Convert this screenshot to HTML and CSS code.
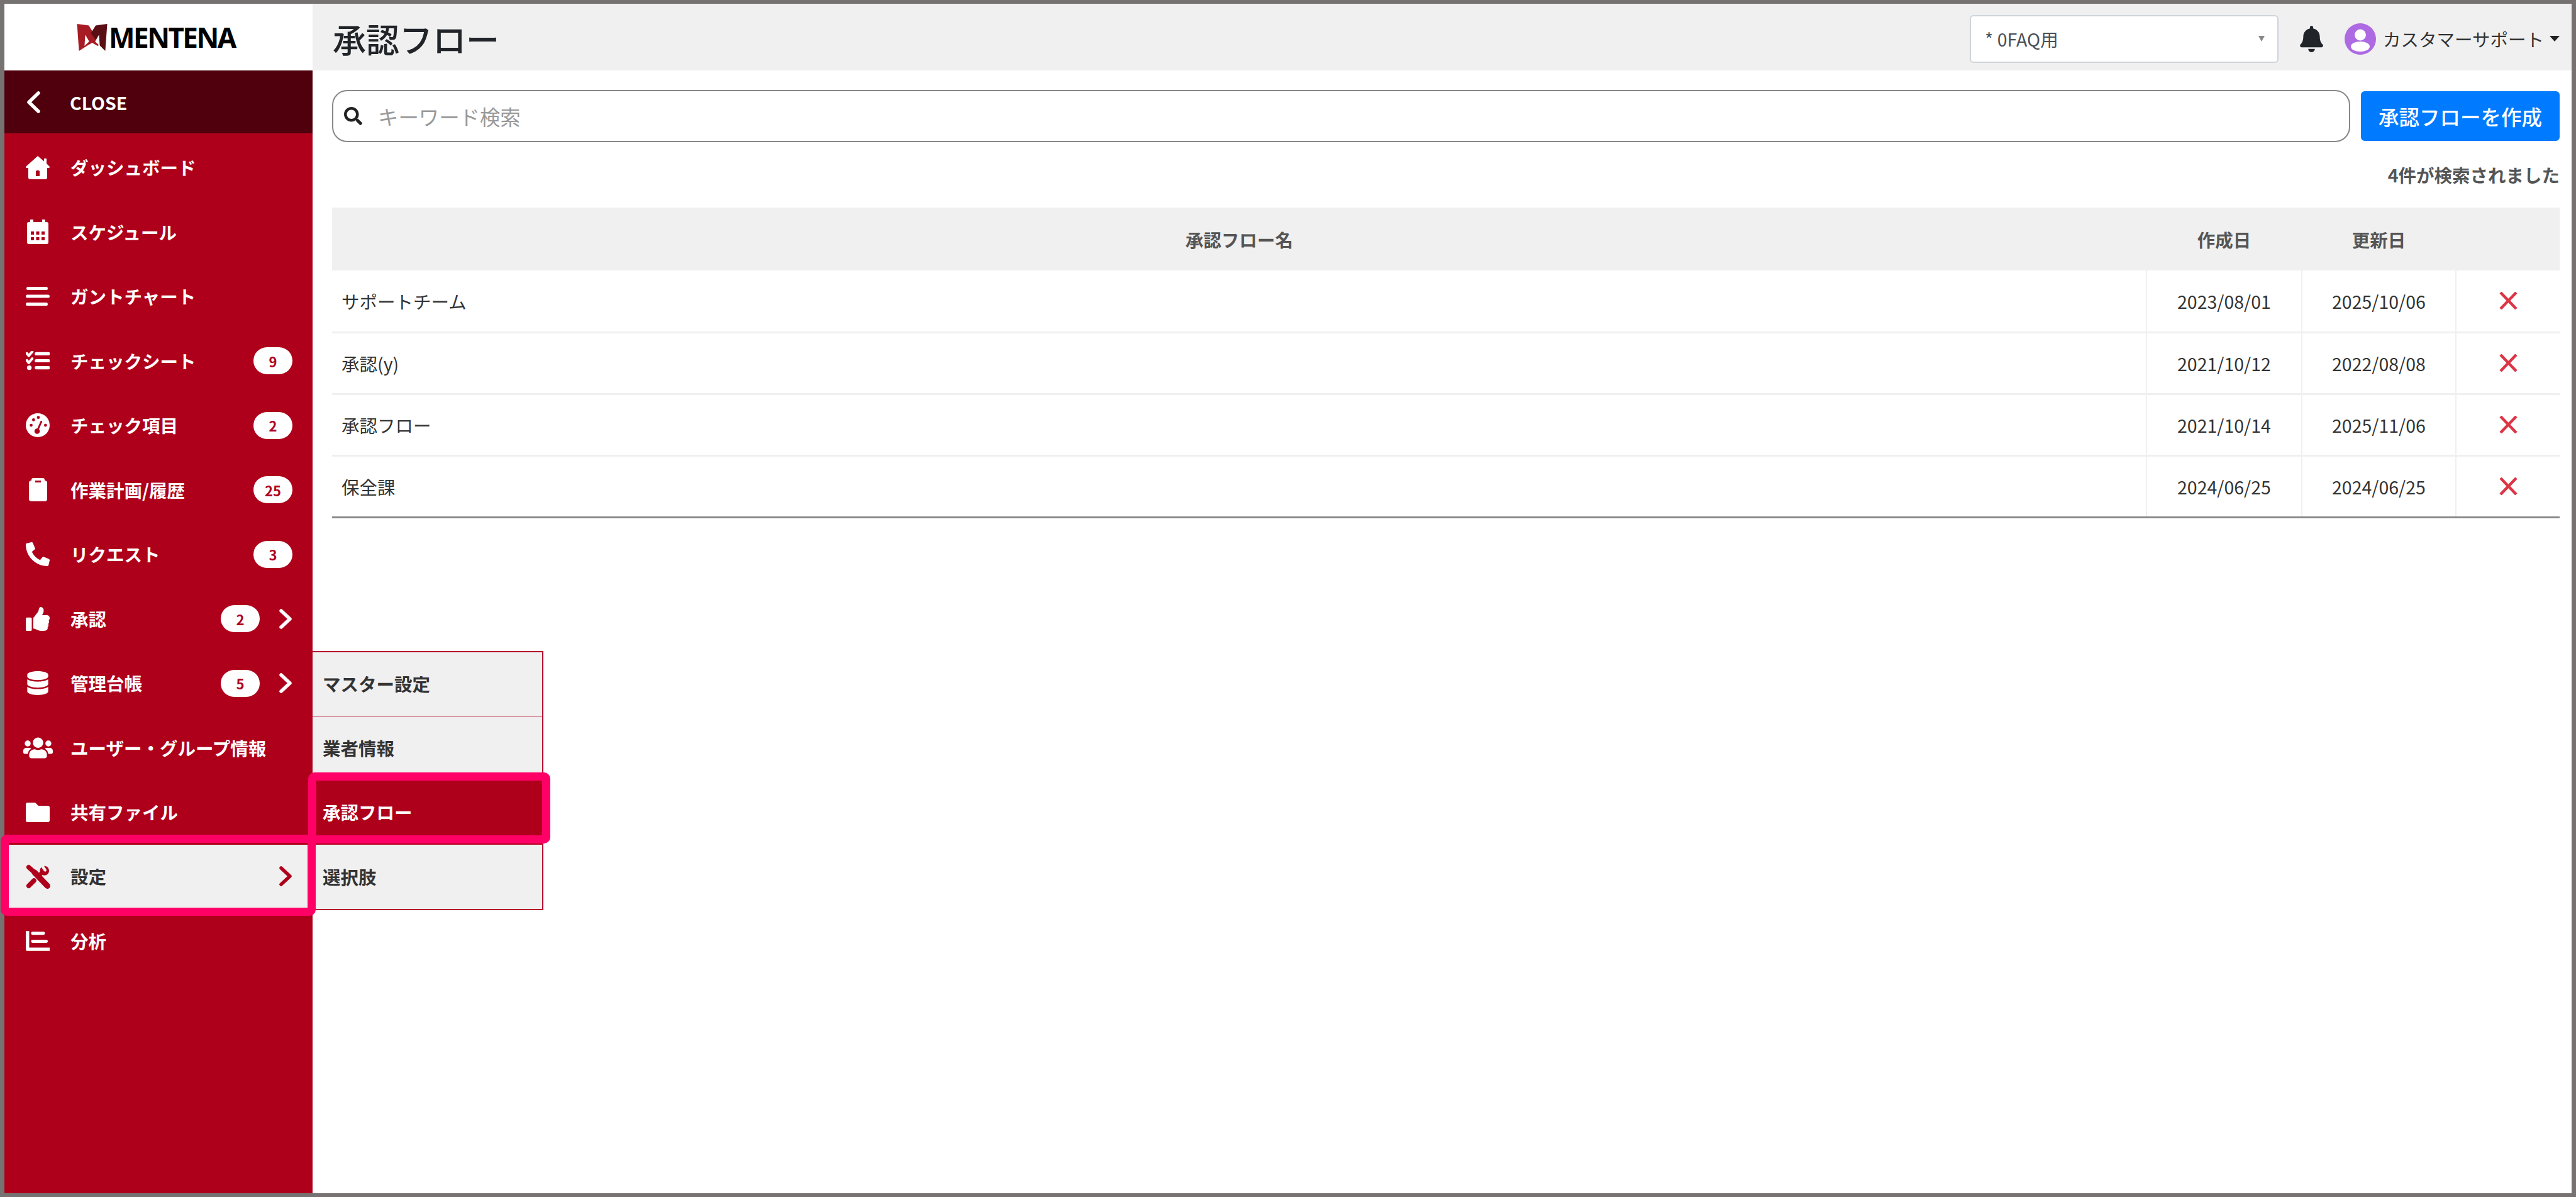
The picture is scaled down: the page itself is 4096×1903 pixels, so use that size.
FILE: index.html
```html
<!DOCTYPE html>
<html lang="ja">
<head>
<meta charset="utf-8">
<title>承認フロー</title>
<link rel="stylesheet" href="styles.css">
</head>
<body>
<div class="frame">
  <aside class="sidebar">
    <div class="logo">
      <svg class="logo-mark" viewBox="0 0 154 138">
        <polygon class="lg-red" points="0,0 60,8 118,104 105,112 77,96 50,112 10,138"/>
        <polygon class="lg-dark" points="154,0 95,8 70,48 118,112 144,138"/>
        <polygon class="lg-white" points="42,55 62,90 38,112"/>
        <polygon class="lg-white" points="112,55 92,90 116,112"/>
      </svg>
      <span class="logo-text">MENTENA</span>
    </div>
    <div class="close-row">
      <svg class="close-chevron" viewBox="0 0 23 35"><polyline class="st-white" points="19,3 4,17.500 19,32"/></svg>
      <span>CLOSE</span>
    </div>
    <nav class="nav">
      <a class="row">
        <span class="ic"><svg class="i-home" viewBox="0 0 38 37"><path class="f-white" fill-rule="evenodd" d="M19 0 L29 8.500 V4 H33 V12 L38 17 Q38.500 19 36 19 H34 V34 Q34 37 31 37 H7 Q4 37 4 34 V19 H2 Q-0.500 19 0 17 Z M16 24 V32 H22 V24 Q19 21.500 16 24 Z"/></svg></span>
        <span class="lb">ダッシュボード</span>
      </a>
      <a class="row">
        <span class="ic"><svg class="i-cal" viewBox="0 0 34 39"><path class="f-white" fill-rule="evenodd" d="M5 0 H10 V4 H24 V0 H29 V4 H31 Q34 4 34 7 V36 Q34 39 31 39 H3 Q0 39 0 36 V7 Q0 4 3 4 H5 Z M6 19 V24 H11 V19 Z M14.500 19 V24 H19.500 V19 Z M23 19 V24 H28 V19 Z M6 28 V33 H11 V28 Z M14.500 28 V33 H19.500 V28 Z M23 28 V33 H28 V28 Z"/></svg></span>
        <span class="lb">スケジュール</span>
      </a>
      <a class="row">
        <span class="ic"><svg class="i-bars" viewBox="0 0 38 30"><path class="f-white" d="M3 0 H33 Q35 0 35 2.500 Q35 5 33 5 H3 Q1 5 1 2.500 Q1 0 3 0 Z M2 12.500 H36 Q38 12.500 38 15 Q38 17.500 36 17.500 H2 Q0 17.500 0 15 Q0 12.500 2 12.500 Z M2 25 H33 Q35 25 35 27.500 Q35 30 33 30 H2 Q0 30 0 27.500 Q0 25 2 25 Z"/></svg></span>
        <span class="lb">ガントチャート</span>
      </a>
      <a class="row">
        <span class="ic"><svg class="i-tasks" viewBox="0 0 41 33"><polyline class="st-check" points="2,4 5,8 11,1"/><polyline class="st-check" points="2,16 5,20 11,13"/><circle class="f-white" cx="6" cy="28.500" r="4"/><path class="st-line" d="M18 4.500 H39 M18 16.500 H39 M18 28.500 H39"/></svg></span>
        <span class="lb">チェックシート</span>
        <span class="badge">9</span>
      </a>
      <a class="row">
        <span class="ic"><svg class="i-gauge" viewBox="0 0 40 40"><circle class="f-white" cx="20" cy="20" r="20"/><circle class="f-red" cx="13" cy="11" r="2.500"/><circle class="f-red" cx="21" cy="7" r="2.500"/><circle class="f-red" cx="9" cy="20" r="2.500"/><circle class="f-red" cx="33" cy="20" r="2.500"/><path class="st-needle" d="M19 30 L26 14"/><circle class="f-red" cx="19" cy="30" r="4.500"/></svg></span>
        <span class="lb">チェック項目</span>
        <span class="badge">2</span>
      </a>
      <a class="row">
        <span class="ic"><svg class="i-clip" viewBox="0 0 29 37"><path class="f-white" fill-rule="evenodd" d="M7 0 H22 Q25 0 25 3 V4 Q29 4 29 8 V33 Q29 37 25 37 H4 Q0 37 0 33 V8 Q0 4 4 4 V3 Q4 0 7 0 Z M10 4 V7 H19 V4 Z"/></svg></span>
        <span class="lb">作業計画/履歴</span>
        <span class="badge">25</span>
      </a>
      <a class="row">
        <span class="ic"><svg class="i-phone" viewBox="0 0 512 512"><path class="f-white" transform="translate(512 0) scale(-1 1)" d="M493.4 24.6l-104-24c-11.3-2.6-22.9 3.300-27.5 13.900l-48 112c-4.200 9.800-1.400 21.300 6.900 28l60.600 49.600c-36 76.700-98.900 140.500-177.200 177.200l-49.600-60.600c-6.800-8.300-18.200-11.100-28-6.900l-112 48C3.900 366.500-2 378.100.6 389.400l24 104C27.100 504.200 36.700 512 48 512c256.100 0 464-207.500 464-464 0-11.200-7.700-20.900-18.600-23.400z"/></svg></span>
        <span class="lb">リクエスト</span>
        <span class="badge">3</span>
      </a>
      <a class="row has-sub">
        <span class="ic"><svg class="i-thumb" viewBox="0 0 512 512"><path class="f-white" d="M104 224H24c-13.255 0-24 10.745-24 24v240c0 13.255 10.745 24 24 24h80c13.255 0 24-10.745 24-24V248c0-13.255-10.745-24-24-24zM384 81.452c0 42.416-25.97 66.208-33.277 94.548h101.723c33.397 0 59.397 27.746 59.553 58.098.084 17.938-7.546 37.249-19.439 49.197l-.11.11c9.836 23.337 8.237 56.037-9.308 79.469 8.681 25.895-.069 57.704-16.382 74.757 4.298 17.598 2.244 32.575-6.148 44.632C440.202 511.587 389.616 512 346.839 512l-2.845-.001c-48.287-.017-87.806-17.598-119.56-31.725-15.957-7.099-36.821-15.887-52.651-16.178-6.54-.12-11.783-5.457-11.783-11.998v-213.77c0-3.2 1.282-6.271 3.558-8.521 39.614-39.144 56.648-80.587 89.117-113.111 14.804-14.832 20.188-37.236 25.393-58.902C282.515 39.293 291.817 0 312 0c24 0 72 8 72 81.452z"/></svg></span>
        <span class="lb">承認</span>
        <span class="badge">2</span>
        <svg class="chev" viewBox="0 0 20 32"><polyline class="st-white" points="3,3 17,16 3,29"/></svg>
      </a>
      <a class="row has-sub">
        <span class="ic"><svg class="i-db" viewBox="0 0 448 512"><path class="f-white" d="M448 73.143v45.714C448 159.143 347.667 192 224 192S0 159.143 0 118.857V73.143C0 32.857 100.333 0 224 0s224 32.857 224 73.143zM448 176v102.857C448 319.143 347.667 352 224 352S0 319.143 0 278.857V176c48.125 33.143 136.208 48.572 224 48.572S399.874 209.143 448 176zm0 160v102.857C448 479.143 347.667 512 224 512S0 479.143 0 438.857V336c48.125 33.143 136.208 48.572 224 48.572S399.874 369.143 448 336z"/></svg></span>
        <span class="lb">管理台帳</span>
        <span class="badge">5</span>
        <svg class="chev" viewBox="0 0 20 32"><polyline class="st-white" points="3,3 17,16 3,29"/></svg>
      </a>
      <a class="row">
        <span class="ic"><svg class="i-users" viewBox="0 0 640 512"><path class="f-white" d="M96 224c35.3 0 64-28.7 64-64s-28.7-64-64-64-64 28.7-64 64 28.7 64 64 64zm448 0c35.3 0 64-28.7 64-64s-28.7-64-64-64-64 28.7-64 64 28.7 64 64 64zm32 32h-64c-17.6 0-33.500 7.100-45.100 18.600 40.300 22.100 68.900 62 75.100 109.400h66c17.700 0 32-14.300 32-32v-32c0-35.300-28.700-64-64-64zm-256 0c61.900 0 112-50.100 112-112S381.900 32 320 32 208 82.100 208 144s50.100 112 112 112zm76.800 32h-8.300c-20.800 10-43.900 16-68.500 16s-47.600-6-68.500-16h-8.300C179.600 288 128 339.600 128 403.200V432c0 26.500 21.500 48 48 48h288c26.500 0 48-21.500 48-48v-28.800c0-63.600-51.600-115.200-115.200-115.200zm-223.700-13.400C161.500 263.100 145.600 256 128 256H64c-35.300 0-64 28.700-64 64v32c0 17.700 14.300 32 32 32h65.900c6.300-47.400 34.900-87.300 75.200-109.400z"/></svg></span>
        <span class="lb">ユーザー・グループ情報</span>
      </a>
      <a class="row">
        <span class="ic"><svg class="i-folder" viewBox="0 0 38 31"><path class="f-white" d="M3 0 H15 L20 5 H35 Q38 5 38 8 V28 Q38 31 35 31 H3 Q0 31 0 28 V3 Q0 0 3 0 Z"/></svg></span>
        <span class="lb">共有ファイル</span>
      </a>
      <a class="row row-active has-sub">
        <span class="ic"><svg class="i-tools" viewBox="0 0 42 42"><path class="st-tool-a" d="M5 5 L15 14"/><path class="st-tool-b" d="M15 14 L37 37"/><path class="st-tool-a" d="M5 37 L14 28"/><path class="st-tool-c" d="M21 21 L30 12"/><circle class="f-red" cx="32" cy="11" r="8"/><path class="st-tool-n" d="M29 4 L33 10"/></svg></span>
        <span class="lb">設定</span>
        <svg class="chev chev-spaced" viewBox="0 0 20 32"><polyline class="st-red" points="3,3 17,16 3,29"/></svg>
      </a>
      <a class="row">
        <span class="ic"><svg class="i-chart" viewBox="0 0 42 35"><path class="f-white" d="M0 0 H6 V29 H42 V35 H2 Q0 35 0 33 Z"/><path class="st-line-th" d="M12 4 H31 M12 18 H36"/></svg></span>
        <span class="lb">分析</span>
      </a>
    </nav>
    <div class="flyout">
      <a class="fly-item">マスター設定</a>
      <a class="fly-item">業者情報</a>
      <a class="fly-item fly-active">承認フロー</a>
      <a class="fly-item">選択肢</a>
    </div>
  </aside>
  <main class="main">
    <header class="topbar">
      <h1 class="title">承認フロー</h1>
      <div class="select">
        <span>* 0FAQ用</span>
        <i class="select-arrow"></i>
      </div>
      <svg class="bell" viewBox="0 0 448 512"><path class="f-bell" d="M224 512c35.320 0 63.970-28.650 63.970-64H160.030c0 35.350 28.650 64 63.970 64zm215.390-149.710c-19.320-20.760-55.470-51.990-55.470-154.290 0-77.700-54.480-139.900-127.940-155.160V32c0-17.670-14.320-32-31.980-32s-31.980 14.330-31.980 32v20.840C118.560 68.100 64.080 130.300 64.080 208c0 102.300-36.150 133.530-55.470 154.290-6 6.450-8.660 14.160-8.610 21.710.11 16.400 12.980 32 32.100 32h383.800c19.120 0 32-15.600 32.100-32 .05-7.550-2.610-15.270-8.610-21.710z"/></svg>
      <svg class="avatar" viewBox="0 0 50 50"><circle class="f-purple" cx="25" cy="25" r="25"/><circle class="f-plain" cx="25" cy="18.500" r="9"/><ellipse class="f-plain" cx="25" cy="37" rx="15" ry="8"/></svg>
      <span class="user">カスタマーサポート</span>
      <i class="user-caret"></i>
    </header>
    <div class="content">
      <div class="tools">
        <div class="search">
          <svg class="search-ic" viewBox="0 0 512 512"><path class="f-dark" d="M505 442.700L405.300 343c-4.500-4.500-10.600-7-17-7H372c27.600-35.300 44-79.700 44-128C416 93.100 322.900 0 208 0S0 93.100 0 208s93.100 208 208 208c48.300 0 92.700-16.400 128-44v16.300c0 6.400 2.500 12.500 7 17l99.700 99.700c9.400 9.400 24.600 9.400 33.900 0l28.300-28.300c9.400-9.400 9.400-24.600.1-34zM208 336c-70.700 0-128-57.200-128-128 0-70.700 57.200-128 128-128 70.700 0 128 57.200 128 128 0 70.700-57.200 128-128 128z"/></svg>
          <span class="placeholder">キーワード検索</span>
        </div>
        <button class="create">承認フローを作成</button>
      </div>
      <p class="count">4件が検索されました</p>
      <table class="grid">
        <colgroup><col><col class="c-date"><col class="c-upd"><col class="c-del"></colgroup>
        <thead>
          <tr><th>承認フロー名</th><th>作成日</th><th>更新日</th><th></th></tr>
        </thead>
        <tbody>
          <tr><td>サポートチーム</td><td class="d">2023/08/01</td><td class="d">2025/10/06</td><td class="d"><svg class="del" viewBox="0 0 29 28"><path class="st-del" d="M2 1 L27 27 M27 1 L2 27"/></svg></td></tr>
          <tr><td>承認(y)</td><td class="d">2021/10/12</td><td class="d">2022/08/08</td><td class="d"><svg class="del" viewBox="0 0 29 28"><path class="st-del" d="M2 1 L27 27 M27 1 L2 27"/></svg></td></tr>
          <tr><td>承認フロー</td><td class="d">2021/10/14</td><td class="d">2025/11/06</td><td class="d"><svg class="del" viewBox="0 0 29 28"><path class="st-del" d="M2 1 L27 27 M27 1 L2 27"/></svg></td></tr>
          <tr><td>保全課</td><td class="d">2024/06/25</td><td class="d">2024/06/25</td><td class="d"><svg class="del" viewBox="0 0 29 28"><path class="st-del" d="M2 1 L27 27 M27 1 L2 27"/></svg></td></tr>
        </tbody>
      </table>
    </div>
  </main>
  <div class="mark mark-settings"></div>
  <div class="mark mark-flow"></div>
</div>
</body>
</html>
```

FILE: styles.css
```css
* { box-sizing: border-box; }
html, body { margin: 0; padding: 0; height: 100%; }
body {
  font-family: "Noto Sans CJK JP", "Noto Sans", sans-serif;
  font-size: 28.500px;
  color: #333;
  background: #fff;
  overflow: hidden;
}
.frame {
  display: flex;
  width: 4096px;
  height: 1903px;
  border: 7px solid #767272;
  border-top-width: 6px;
  border-bottom-width: 6px;
  position: relative;
  background: #fff;
}

/* svg paint */
.f-white { fill: #fff; }
.f-red { fill: #ae001b; }
.f-bell { fill: #212529; }
.f-dark { fill: #222; }
.f-purple { fill: #ad6ae3; }
.f-plain { fill: #fff; }
.lg-red { fill: #a71c24; }
.lg-dark { fill: #5a0f14; }
.lg-white { fill: #fff; }
.st-white, .st-red { fill: none; stroke-width: 5.500; stroke-linecap: round; stroke-linejoin: round; }
.st-white { stroke: #fff; }
.st-red { stroke: #ae001b; }
.st-check { fill: none; stroke: #fff; stroke-width: 4.500; stroke-linecap: round; stroke-linejoin: round; }
.st-line { stroke: #fff; stroke-width: 5.500; stroke-linecap: round; fill: none; }
.st-line-th { stroke: #fff; stroke-width: 5.500; stroke-linecap: round; fill: none; }
.st-needle { stroke: #ae001b; stroke-width: 3; stroke-linecap: round; fill: none; }
.st-tool-a { stroke: #ae001b; stroke-width: 8; stroke-linecap: round; fill: none; }
.st-tool-b { stroke: #ae001b; stroke-width: 10; stroke-linecap: round; fill: none; }
.st-tool-c { stroke: #ae001b; stroke-width: 7; fill: none; }
.st-tool-n { stroke: #f0f0f0; stroke-width: 5; stroke-linecap: round; fill: none; }
.st-del { stroke: #dc3545; stroke-width: 4.500; fill: none; }

/* sidebar */
.sidebar {
  flex: 0 0 490px;
  background: #ae001b;
  position: relative;
  font-weight: 700;
  color: #fff;
}
.logo {
  height: 106px;
  background: #fff;
  display: flex;
  align-items: center;
  padding-left: 115px;
  gap: 2px;
}
.logo-mark { width: 49px; height: 43px; }
.logo-text {
  font-family: "Noto Sans", sans-serif;
  font-size: 44px;
  font-weight: 700;
  letter-spacing: -2.500px;
  line-height: 1;
  color: #000;
}
.close-row {
  height: 100px;
  background: #50000c;
  display: flex;
  align-items: center;
  padding-left: 35px;
  gap: 46px;
}
.close-chevron { width: 23px; height: 35px; }
.nav { padding-top: 3px; }
.row {
  height: 102.500px;
  display: flex;
  align-items: center;
  padding: 0 32px 0 34px;
}
.ic {
  flex: 0 0 38px;
  min-width: 0;
  margin-right: 33px;
  display: flex;
  align-items: center;
  justify-content: center;
}
.ic svg { display: block; flex: none; }
.i-home { width: 38px; height: 37px; }
.i-cal { width: 34px; height: 39px; }
.i-bars { width: 38px; height: 30px; }
.i-tasks { width: 38px; height: 31px; }
.i-gauge { width: 38px; height: 38px; }
.i-clip { width: 29px; height: 37px; }
.i-phone { width: 38px; height: 38px; }
.i-thumb { width: 38px; height: 38px; }
.i-db { width: 34px; height: 38px; }
.i-users { width: 47px; height: 38px; }
.i-folder { width: 38px; height: 31px; }
.i-tools { width: 39px; height: 39px; }
.i-chart { width: 38px; height: 32px; }
.lb { flex: 1; white-space: nowrap; line-height: 1; }
.badge {
  flex: 0 0 62px;
  height: 43px;
  border-radius: 21.500px;
  background: #fff;
  color: #ae001b;
  font-size: 22px;
  font-weight: 700;
  display: flex;
  align-items: center;
  justify-content: center;
  line-height: 1;
}
.chev { flex: 0 0 20px; width: 20px; height: 32px; margin-left: 31px; }
.has-sub { padding-right: 33px; }
.row-active { background: #f0f0f0; color: #333; border-bottom: 1px solid #ae001b; }
.chev-spaced { margin-left: 0; }

/* flyout submenu */
.flyout {
  position: absolute;
  left: 490px;
  top: 1029px;
  width: 367px;
  border: 2px solid #b5102e;
  border-left: 0;
  color: #333;
  z-index: 2;
}
.fly-item {
  display: flex;
  align-items: center;
  height: 102px;
  padding-left: 16px;
  background: #f0f0f0;
  border-bottom: 1px solid #b5102e;
  line-height: 1;
}
.fly-item:last-child { border-bottom: 0; }
.fly-active { background: #ae001b; color: #fff; }

/* main */
.main { flex: 1; min-width: 0; display: flex; flex-direction: column; }
.topbar {
  height: 106px;
  flex: none;
  background: #f0f0f0;
  display: flex;
  align-items: center;
  padding: 5px 19px 0 32px;
}
.title {
  margin: 0 auto 0 0;
  font-size: 53px;
  font-weight: 500;
  color: #212529;
  line-height: 1;
}
.select {
  width: 491px;
  height: 76px;
  background: #fff;
  border: 2px solid #ced4da;
  border-radius: 6px;
  display: flex;
  align-items: center;
  padding: 0 20px 0 22px;
  color: #495057;
}
.select span { flex: 1; }
.select-arrow {
  width: 0; height: 0;
  border-left: 5.500px solid transparent;
  border-right: 5.500px solid transparent;
  border-top: 9px solid #888;
}
.bell { width: 37px; height: 42px; margin: 0 34px; }
.avatar { width: 50px; height: 50px; margin-right: 11px; }
.user { color: #333; white-space: nowrap; }
.user-caret {
  margin-left: 9px;
  width: 0; height: 0;
  border-left: 8px solid transparent;
  border-right: 8px solid transparent;
  border-top: 9px solid #222;
}
.content { padding: 31px 19px 0 31px; }
.tools { display: flex; align-items: center; gap: 17px; }
.search {
  flex: 1;
  height: 83px;
  border: 2px solid #888;
  border-radius: 24px;
  display: flex;
  align-items: center;
  padding-left: 17px;
  background: #fff;
}
.search-ic { width: 29px; height: 29px; margin-right: 25px; }
.placeholder { font-size: 32.400px; color: #999; }
.create {
  flex: 0 0 316px;
  height: 79px;
  border: 0;
  border-radius: 6px;
  background: #007bff;
  color: #fff;
  font: inherit;
  font-size: 32.500px;
  font-weight: 500;
  padding: 0;
}
.count {
  margin: 29px 0 0;
  height: 45px;
  line-height: 45px;
  text-align: right;
  font-weight: 700;
  color: #555;
}
.grid {
  margin-top: 30px;
  width: 100%;
  border-collapse: collapse;
  table-layout: fixed;
}
.c-date { width: 247px; }
.c-upd { width: 245px; }
.c-del { width: 165px; }
.grid th {
  height: 100px;
  background: #f0f0f0;
  color: #555;
  font-weight: 700;
  text-align: center;
  padding: 0;
}
.grid td {
  height: 98px;
  border-bottom: 3px solid #f0f0f0;
  padding: 0 0 0 15px;
  color: #333;
}
.grid td.d {
  border-left: 2px solid #f0f0f0;
  text-align: center;
  padding: 0;
}
.grid tbody tr:last-child td { border-bottom: 3px solid #888; }
.del { width: 29px; height: 28px; display: block; margin: 0 auto; }

/* annotation highlights */
.mark {
  position: absolute;
  border: 13px solid #ff0066;
  border-radius: 10px;
  z-index: 5;
  pointer-events: none;
}
.mark-settings { left: -6px; top: 1321px; width: 501px; height: 129px; }
.mark-flow { left: 483px; top: 1222px; width: 385px; height: 113px; }
```
